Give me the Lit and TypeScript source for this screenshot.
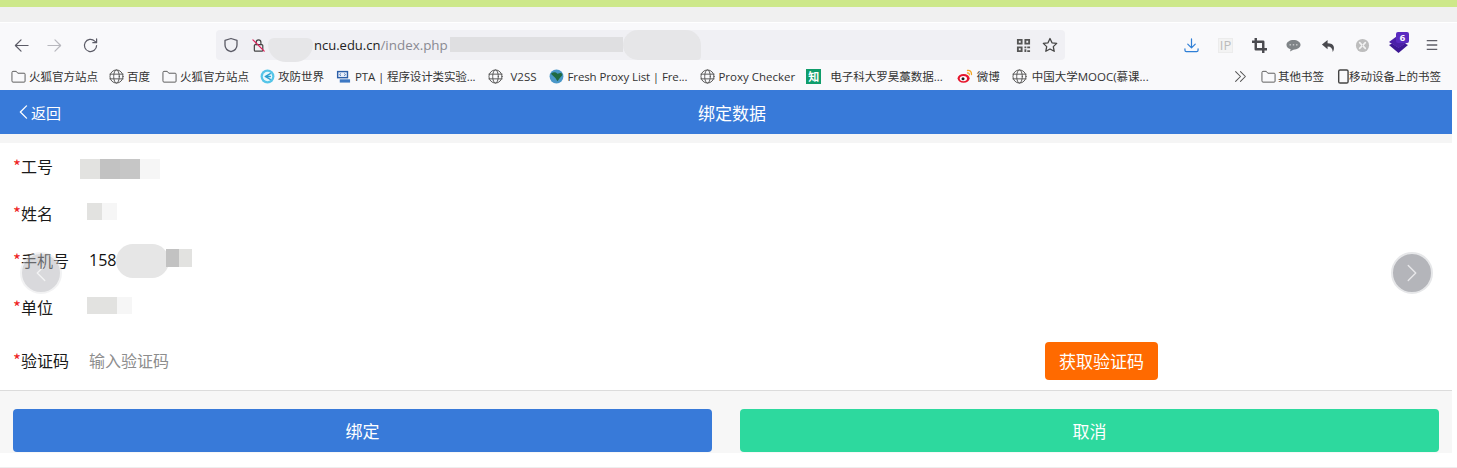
import { LitElement, html, css, svg } from "lit";
import { customElement } from "lit/decorators.js";

const ic = (w: number, body: unknown, cls = "") =>
  html`<svg class="ic ${cls}" width=${w} height=${w} viewBox="0 0 16 16" fill="none" stroke="currentColor" stroke-width="1.3" stroke-linecap="round" stroke-linejoin="round">${body}</svg>`;

const folder = ic(15, svg`<path d="M1 3.500q0-1 1-1h3.600l1.600 2H14q1 0 1 1v7.500q0 1-1 1H2q-1 0-1-1z" stroke="#555" stroke-width="1"/>`);
const globe = ic(15, svg`<g stroke="#555" stroke-width="1"><circle cx="8" cy="8" r="7"/><ellipse cx="8" cy="8" rx="3" ry="7"/><path d="M1 5.500h14M1 10.500h14"/></g>`);
const gf = ic(15, svg`<circle cx="8" cy="8" r="7.400" fill="#55c5e8" stroke="none"/><circle cx="8" cy="8" r="5" fill="#e8f8fc" stroke="none"/><path d="M11 5 5.500 8l5.500 3M6 8h5" stroke="#2a9fd0" stroke-width="1.400"/>`);
const pta = ic(15, svg`<rect x="1" y="2" width="12" height="8" fill="#2c5fa8" stroke="none"/><rect x="2.500" y="3.500" width="9" height="5" fill="#e8effa" stroke="none"/><path d="M5 5 3.800 6 5 7M9 5l1.200 1L9 7" stroke="#2c5fa8" stroke-width=".8"/><path d="M4 11h11V14.500H4z" fill="#3d78c4" stroke="none"/>`);
const earth = ic(15, svg`<circle cx="8" cy="8" r="7.400" fill="#4a97c8" stroke="none"/><path d="M2 5q4-3 7 0l4-1q2 2 1 3-3 3-5 6-2-4-7-8z" fill="#1f6a42" stroke="none"/>`);
const zhi = html`<span class="zhi">知</span>`;
const weibo = ic(16, svg`<ellipse cx="6.600" cy="10.300" rx="6" ry="4.400" fill="#e6162d" stroke="none"/><ellipse cx="6.400" cy="10.600" rx="3.600" ry="2.700" fill="#fff" stroke="none"/><circle cx="6" cy="10.800" r="1.500" fill="#222" stroke="none"/><path d="M10.500 2.500q4-.4 4 4M10.500 5q2-.2 1.800 1.800" stroke="#f5a623" stroke-width="1.300"/>`);

const marks = [
  { i: folder, t: "火狐官方站点", c: "b1" },
  { i: globe, t: "百度", c: "b2" },
  { i: folder, t: "火狐官方站点", c: "b3" },
  { i: gf, t: "攻防世界", c: "b4" },
  { i: pta, t: "PTA | 程序设计类实验...", c: "b5" },
  { i: globe, t: "V2SS", c: "b6" },
  { i: earth, t: "Fresh Proxy List | Fre...", c: "b7" },
  { i: globe, t: "Proxy Checker", c: "b8" },
  { i: zhi, t: "电子科大罗昊藁数据...", c: "b9" },
  { i: weibo, t: "微博", c: "b10" },
  { i: globe, t: "中国大学MOOC(慕课...", c: "b11" },
];

@customElement("app-root")
export class AppRoot extends LitElement {
  static styles = css`
    :host { display: block; width: 1457px; height: 468px; position: relative; overflow: hidden; background: #fff;
      font-family: "Noto Sans CJK SC", "Open Sans", sans-serif; }
    .lime { height: 7px; background: #cde88a; }
    .tabs { height: 15px; background: #f0f0f0; border-bottom: 1px solid #fff; }
    .chrome { background: #f9f9fb; height: 67px; display: flex; flex-direction: column; }
    .nav { height: 36px; padding-top: 6px; display: flex; align-items: center; color: #5b5b66; }
    .ic { flex: none; display: block; }
    .nav .back { margin-left: 14px; }
    .nav .fwd { margin-left: 18px; color: #b8b8be; }
    .nav .reload { margin-left: 21px; }
    .url { margin-left: 118px; width: 849px; height: 30px; background: #f0f0f4; border-radius: 4px; display: flex; align-items: center; flex: none; font-family: "Open Sans", sans-serif; }
    .shield { margin-left: 7px; }
    .lock { margin-left: 13px; }
    .blob1 { width: 45px; height: 24px; margin: 10px 0 0 1px; border-radius: 6px 6px 18px 18px; background: #e6e6e8; flex: none; }
    .host { color: #222; margin-left: 1px; font-size: 13px; }
    .path { color: #8a8a92; font-size: 13.400px; }
    .band { width: 173px; height: 15px; margin: -2px 0 0 2px; background: #dfdfe1; flex: none; }
    .blob2 { width: 78px; height: 30px; margin-right: auto; border-radius: 15px 15px 4px 15px; background: #e6e6e8; flex: none; }
    .qr { margin-right: 11px; }
    .star { margin-right: 7px; }
    .tools { display: flex; align-items: center; margin-left: 119px; gap: 19px; color: #4a4a4f; }
    .dl { color: #2f7fd6; }
    .ip { font: 13px "Open Sans", sans-serif; color: #bbb; background: #f3f3f3; border: 1px solid #ececec; box-sizing: border-box; width: 15px; height: 15px; line-height: 13px; text-align: center; }
    .undo { margin-left: 1px; }
    .badgebox { position: relative; width: 19px; height: 20px; color: #4b1fa8; margin-top: -2px; }
    .badgebox svg { display: block; }
    .badge { position: absolute; right: -1px; top: -2px; width: 13px; height: 11px; border-radius: 2px; background: #5a2bc0; color: #fff; font: 700 9.500px/11px "Open Sans", sans-serif; text-align: center; }
    .menu { margin-left: -2px; color: #5f5f68; }
    .bar { height: 28px; display: flex; align-items: center; padding: 0 0 2px 11px; box-sizing: border-box; margin-top: 3px; font-size: 11.500px; color: #333; }
    .mark { display: flex; align-items: center; gap: 3px; flex: none; white-space: nowrap; font-family: "Open Sans", "Noto Sans CJK SC", sans-serif; }
    .b2 { margin-left: 11px; }
    .b3 { margin-left: 12px; }
    .b4 { margin-left: 11px; }
    .b5 { margin-left: 12px; gap: 4px; letter-spacing: -.12px; }
    .b6 { margin-left: 13px; gap: 7px; }
    .b7 { margin-left: 12px; gap: 4px; letter-spacing: -.12px; }
    .b8 { margin-left: 13px; }
    .b9 { margin-left: 11px; gap: 9px; }
    .b10 { margin-left: 14px; gap: 4px; }
    .b11 { margin-left: 12px; gap: 5px; }
    .zhi { width: 15px; height: 15px; background: #0f9d6b; color: #fff; font-size: 11px; line-height: 15px; text-align: center; flex: none; font-weight: 700; }
    .more { margin-left: auto; margin-right: 14px; color: #555; }
    .other { margin-right: 10px; gap: 2px; }
    .mobile { gap: 0; margin-right: 16px; }
    .head { width: 1452px; height: 44px; background: #387ad9; color: #fff; display: flex; align-items: center; position: relative; box-sizing: border-box; padding-left: 16px; font-size: 15px; }
    .backbtn { display: flex; align-items: center; gap: 1px; }
    .title { position: absolute; left: 698px; font-size: 17px; }
    .gap { width: 1452px; height: 9px; background: #f5f5f5; }
    .form { width: 1452px; height: 247px; display: grid; grid-template-rows: 47px 47px 47px 47px 59px; }
    .row { display: flex; align-items: center; padding: 0 0 2px 14px; font-size: 16px; color: #1a1a1a; }
    .star-r { color: #e22; font-size: 17px; width: 7px; flex: none; margin: 0 0 0 -1px; padding-right: 1px; }
    .lab { width: 68px; flex: none; }
    .val { font: 16px "Open Sans", sans-serif; color: #111; }
    .ph { color: #8d8d8d; font-size: 16px; flex: none; }
    .rd { display: flex; flex: none; }
    .rd i { display: block; height: 20px; width: 20px; }
    .r1 { margin: 6px 0 0 -9px; }
    .c1 { background: #e2e2e0; } .c2 { background: #c2c2c2; } .c3 { background: #c6c6c6; } .c4 { background: #f6f6f6; }
    .rd.small { margin: -3px 0 0 -2px; }
    .rd.small i { height: 17px; width: 15px; }
    .blob3 { width: 53px; height: 34px; margin-top: 2px; border-radius: 17px; background: #e6e6e6; flex: none; }
    .tail { display: flex; flex: none; margin: -4px 0 0 -3px; }
    .tail i { display: block; width: 13px; height: 18px; }
    .send { flex: none; margin: 2px 0 0 876px; width: 113px; height: 38px; background: #ff6a00; border-radius: 4px; color: #fff; font-size: 17px; line-height: 38px; text-align: center; }
    .foot { width: 1452px; height: 63px; box-sizing: border-box; border-top: 1px solid #dcdcdc; background: #f7f7f7; padding: 18px 13px 1px; display: grid; grid-template-columns: 1fr 1fr; gap: 28px; }
    .btn { border-radius: 4px; color: #fff; font-size: 17px; display: flex; align-items: center; justify-content: center; }
    .blue { background: #387ad9; }
    .green { background: #2dd99e; }
    .end { margin-top: 14px; height: 1px; background: #eee; }
    .arrow { position: absolute; top: 252px; width: 42px; height: 42px; border-radius: 50%; box-sizing: border-box; border: 2px solid #e6e7e9; background: #b4b5ba; display: flex; align-items: center; justify-content: center; color: #e8e8ea; }
    .arrow.l { left: 20px; opacity: .5; }
    .arrow.r { left: 1391px; }
  `;

  render() {
    return html`
      <div class="lime"></div>
      <div class="tabs"></div>
      <div class="chrome">
        <div class="nav">
          ${ic(15, svg`<path d="M15 8H1.500M7.500 2 1.500 8l6 6"/>`, "back")}
          ${ic(15, svg`<path d="M1 8h13.500M8.500 2l6 6-6 6"/>`, "fwd")}
          ${ic(15, svg`<path d="M14.500 8a6.500 6.500 0 1 1-2-4.700L14.500 5M14.500 1v4h-4"/>`, "reload")}
          <div class="url">
            ${ic(16, svg`<path d="M8 1.500 2 3.300V8c0 3.500 3 5.800 6 6.700 3-.9 6-3.200 6-6.700V3.300z"/>`, "shield")}
            ${ic(15, svg`<rect x="2.500" y="7" width="9" height="7" rx="1" stroke="#444"/><path d="M4.500 7V4.500a2.500 2.500 0 0 1 5 0V7" stroke="#444"/><path d="M1 2l12 12" stroke="#e0245e"/>`, "lock")}
            <div class="blob1"></div>
            <span class="host">ncu.edu.cn</span><span class="path">/index.php</span>
            <div class="band"></div>
            <div class="blob2"></div>
            ${ic(15, svg`<g fill="#555" stroke="none"><path d="M1 1h6v6H1zm2 2v2h2V3zM9 1h6v6H9zm2 2v2h2V3zM1 9h6v6H1zm2 2v2h2v-2zM9 9h2v2H9zm3 0h3v2h-3zm-3 3h2v3H9zm3 1h3v2h-3z"/></g>`, "qr")}
            ${ic(16, svg`<path d="m8 1.500 2 4.300 4.700.6-3.400 3.200.9 4.700L8 12l-4.200 2.300.9-4.700L1.300 6.400l4.700-.6z" stroke="#444"/>`, "star")}
          </div>
          <div class="tools">
            ${ic(15, svg`<path d="M8 1v9M4 6.500l4 4 4-4M1 11.500V13q0 1.500 1.500 1.500h11q1.500 0 1.500-1.500v-1.500"/>`, "dl")}
            <span class="ip">IP</span>
            ${ic(15, svg`<path d="M4 0v12h12M0 4h12v12" stroke-width="2.600" stroke-linecap="butt"/>`)}
            ${ic(15, svg`<path d="M8 2c4 0 7.500 2.200 7.500 5.200S12 12.400 8 12.400l-3.800 2 .8-2.500C2 11.200.5 9.300.5 7.200.5 4.200 4 2 8 2z" fill="#7f8487" stroke="none"/><g fill="#c8cacc" stroke="none"><circle cx="4.500" cy="7.200" r=".9"/><circle cx="8" cy="7.200" r=".9"/><circle cx="11.500" cy="7.200" r=".9"/></g>`)}
            ${ic(15, svg`<path d="M7 2 1 7l6 5V9c3.500 0 5.500 2 5.500 6 2.500-4 2-9.500-5.500-9.500z" fill="#4a4a4f" stroke="none"/>`, "undo")}
            ${ic(15, svg`<circle cx="8" cy="8" r="7" fill="#bdbdbd" stroke="none"/><path d="M5 5l2 2M11 5 9 7M5 11l2-2M11 11 9 9" stroke="#f2f2f2" stroke-width="1.800"/>`)}
            <div class="badgebox">
              <svg width="19" height="20" viewBox="0 0 19 20"><path d="M0 11l3-1.500 6.500 4 6.500-4 3 1.500-9.500 8z" fill="#3d1794"/><path d="M0 8l9.500-7 9.500 7-9.500 6z" fill="currentColor"/></svg>
              <span class="badge">6</span>
            </div>
            ${ic(14, svg`<path d="M2 3h12M2 8h12M2 13h12" stroke-width="1.600" stroke-linecap="butt"/>`, "menu")}
          </div>
        </div>
        <div class="bar">
          ${marks.map((m) => html`<div class="mark ${m.c}">${m.i}<span>${m.t}</span></div>`)}
          ${ic(13, svg`<path d="M2 2l6 6-6 6M8 2l6 6-6 6"/>`, "more")}
          <div class="mark other">${folder}<span>其他书签</span></div>
          <div class="mark mobile">${ic(15, svg`<rect x="5" y="1" width="10" height="14" rx="1.500" stroke="#444" stroke-width="1.500"/>`)}<span>移动设备上的书签</span></div>
        </div>
      </div>
      <div class="head">
        <div class="backbtn">${ic(14, svg`<path d="M12 1 5 8l7 7" stroke-width="1.500"/>`)}<span>返回</span></div>
        <div class="title">绑定数据</div>
      </div>
      <div class="gap"></div>
      <div class="form">
        <div class="row"><span class="star-r">*</span><span class="lab">工号</span>
          <div class="rd r1"><i class="c1"></i><i class="c2"></i><i class="c3"></i><i class="c4"></i></div></div>
        <div class="row"><span class="star-r">*</span><span class="lab">姓名</span>
          <div class="rd small"><i class="c1"></i><i class="c4"></i></div></div>
        <div class="row"><span class="star-r">*</span><span class="lab">手机号</span>
          <span class="val">158</span><div class="blob3"></div>
          <div class="tail"><i class="c2"></i><i class="c1"></i></div></div>
        <div class="row"><span class="star-r">*</span><span class="lab">单位</span>
          <div class="rd small"><i class="c1"></i><i class="c1"></i><i class="c4"></i></div></div>
        <div class="row"><span class="star-r">*</span><span class="lab">验证码</span>
          <span class="ph">输入验证码</span>
          <div class="send">获取验证码</div></div>
      </div>
      <div class="foot">
        <div class="btn blue">绑定</div>
        <div class="btn green">取消</div>
      </div>
      <div class="end"></div>
      <div class="arrow l">${ic(20, svg`<path d="M11 2 5 8l6 6" stroke-width="1.100"/>`)}</div>
      <div class="arrow r">${ic(20, svg`<path d="m5 2 6 6-6 6" stroke-width="1.100"/>`)}</div>
    `;
  }
}
